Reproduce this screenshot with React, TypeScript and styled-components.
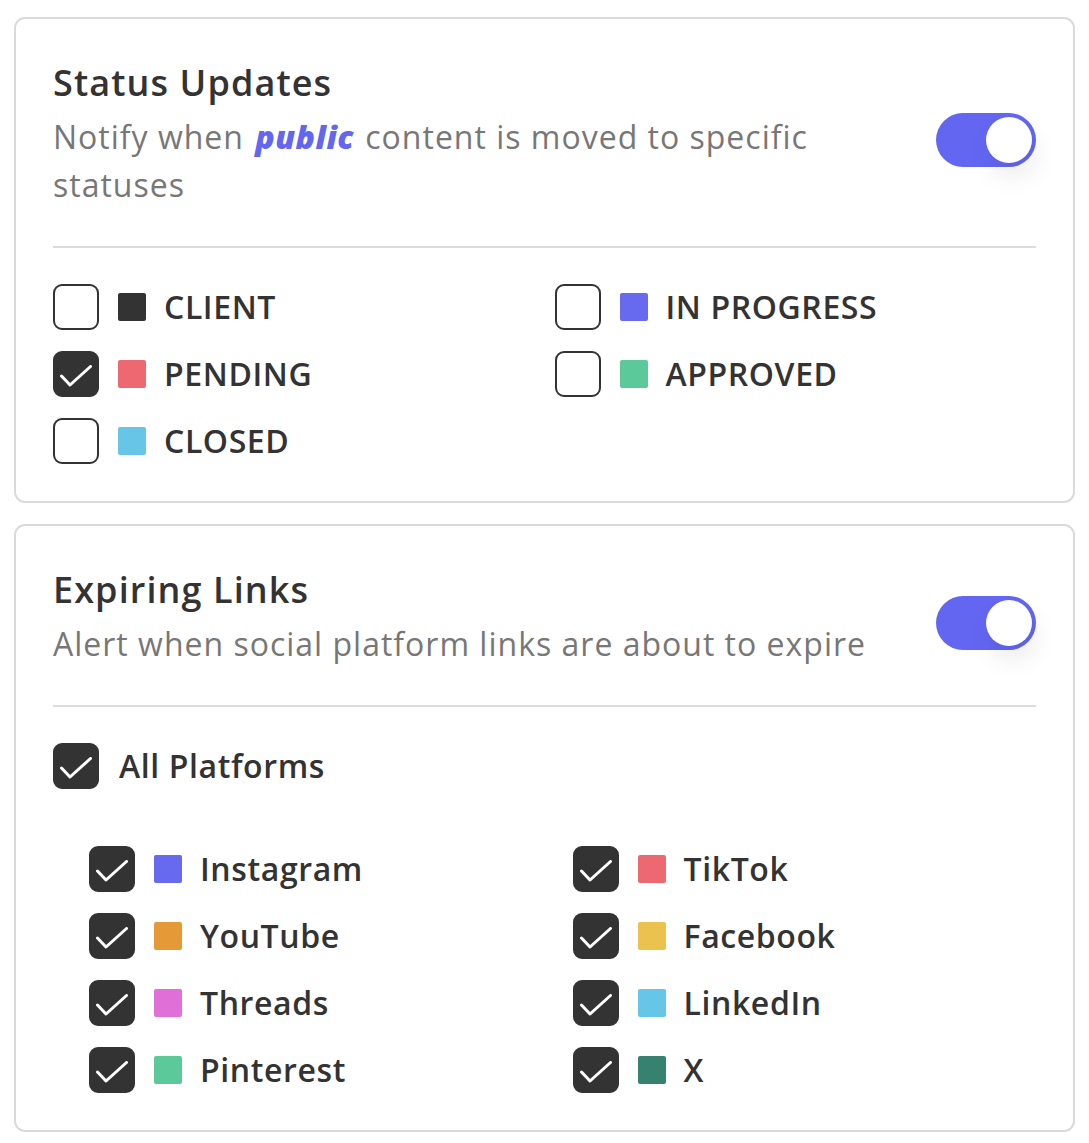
import React from "react";
import styled, { createGlobalStyle } from "styled-components";

const FONT = `"Open Sans", "Noto Sans", sans-serif`;

const GlobalStyle = createGlobalStyle`
  html, body { margin: 0; padding: 0; background: #ffffff; }
  body { font-family: ${FONT}; color: #333333; }
  * { box-sizing: border-box; }
`;

const Page = styled.div`
  display: flex;
  flex-direction: column;
  gap: 21px;
  padding: 17px 14px;
`;

const Card = styled.section`
  background: #ffffff;
  border: 2px solid #dadada;
  border-radius: 11px;
  padding: 37px 37px 37px;
`;

const Header = styled.div`
  display: flex;
  align-items: center;
  justify-content: space-between;
  gap: 24px;
`;

const HeaderText = styled.div`
  max-width: 860px;
`;

const Title = styled.h2`
  margin: 0 0 3px;
  font-size: 36px;
  line-height: 54px;
  font-weight: 600;
  letter-spacing: 1.1px;
  color: #333333;
`;

const Desc = styled.p`
  margin: 0;
  font-size: 32px;
  line-height: 48px;
  font-weight: 400;
  letter-spacing: 1px;
  color: #777777;
`;

const Em = styled.em`
  display: inline-block;
  margin: 0 2px;
  color: #6366f1;
  font-weight: 800;
  font-style: italic;
  letter-spacing: 0.5px;
`;

const Toggle = styled.button<{ $on: boolean }>`
  flex-shrink: 0;
  width: 100px;
  height: 54px;
  margin-top: 15px;
  padding: 4px;
  border: none;
  border-radius: 27px;
  background: ${(p) => (p.$on ? "#6366f1" : "#d4d4d8")};
  display: flex;
  align-items: center;
  justify-content: ${(p) => (p.$on ? "flex-end" : "flex-start")};
  cursor: pointer;
`;

const Knob = styled.span`
  width: 46px;
  height: 46px;
  border-radius: 50%;
  background: #ffffff;
  box-shadow: 4px 14px 26px rgba(0, 0, 0, 0.08);
`;

const Divider = styled.hr`
  border: 0;
  height: 2px;
  background: #dcdcdc;
  margin: 37px 0 36px;
`;

const Grid = styled.div<{ $indent?: boolean }>`
  display: grid;
  grid-template-columns: 1fr 1fr;
  column-gap: 20px;
  row-gap: 21px;
  padding-left: ${(p) => (p.$indent ? "36px" : "0")};
  margin-top: ${(p) => (p.$indent ? "57px" : "0")};
`;

const Option = styled.label`
  display: flex;
  align-items: center;
  height: 46px;
  cursor: pointer;
`;

const Box = styled.span<{ $checked: boolean }>`
  flex-shrink: 0;
  width: 46px;
  height: 46px;
  border: 2.5px solid #333333;
  border-radius: 9px;
  background: ${(p) => (p.$checked ? "#333333" : "#ffffff")};
  display: flex;
  align-items: center;
  justify-content: center;
  padding-top: 3px;
`;

const Swatch = styled.span<{ $color: string }>`
  flex-shrink: 0;
  width: 28px;
  height: 28px;
  margin-left: 19px;
  border-radius: 2px;
  background: ${(p) => p.$color};
`;

const Label = styled.span<{ $gap?: number }>`
  margin-left: ${(p) => p.$gap ?? 18}px;
  font-size: 32px;
  line-height: 1;
  font-weight: 600;
  letter-spacing: 0.6px;
  color: #333333;
  white-space: nowrap;
`;

const Check = () => (
  <svg width="32" height="22" viewBox="0 0 32 22" fill="none">
    <polyline
      points="1.5,11 10,20 30.5,1.5"
      stroke="#ffffff"
      strokeWidth="3"
      strokeLinecap="round"
      strokeLinejoin="round"
    />
  </svg>
);

type Item = { label: string; color: string; checked: boolean };

const statuses: Item[] = [
  { label: "CLIENT", color: "#333333", checked: false },
  { label: "IN PROGRESS", color: "#6769ef", checked: false },
  { label: "PENDING", color: "#ee6871", checked: true },
  { label: "APPROVED", color: "#5cc99a", checked: false },
  { label: "CLOSED", color: "#67c6e8", checked: false },
];

const platforms: Item[] = [
  { label: "Instagram", color: "#6769ef", checked: true },
  { label: "TikTok", color: "#ee6871", checked: true },
  { label: "YouTube", color: "#e59a37", checked: true },
  { label: "Facebook", color: "#ecc24e", checked: true },
  { label: "Threads", color: "#e070d8", checked: true },
  { label: "LinkedIn", color: "#67c6e8", checked: true },
  { label: "Pinterest", color: "#5cc99a", checked: true },
  { label: "X", color: "#378170", checked: true },
];

const OptionRow = ({ item }: { item: Item }) => (
  <Option>
    <Box $checked={item.checked}>{item.checked && <Check />}</Box>
    <Swatch $color={item.color} />
    <Label>{item.label}</Label>
  </Option>
);

export default function App() {
  return (
    <>
      <GlobalStyle />
      <Page>
        <Card>
          <Header>
            <HeaderText>
              <Title>Status Updates</Title>
              <Desc>
                Notify when <Em>public</Em> content is moved to specific statuses
              </Desc>
            </HeaderText>
            <Toggle $on aria-label="Toggle status updates">
              <Knob />
            </Toggle>
          </Header>
          <Divider />
          <Grid>
            {statuses.map((s) => (
              <OptionRow key={s.label} item={s} />
            ))}
          </Grid>
        </Card>
        <Card>
          <Header>
            <HeaderText>
              <Title>Expiring Links</Title>
              <Desc>Alert when social platform links are about to expire</Desc>
            </HeaderText>
            <Toggle $on aria-label="Toggle expiring links">
              <Knob />
            </Toggle>
          </Header>
          <Divider />
          <Option>
            <Box $checked>
              <Check />
            </Box>
            <Label $gap={20}>All Platforms</Label>
          </Option>
          <Grid $indent>
            {platforms.map((p) => (
              <OptionRow key={p.label} item={p} />
            ))}
          </Grid>
        </Card>
      </Page>
    </>
  );
}
